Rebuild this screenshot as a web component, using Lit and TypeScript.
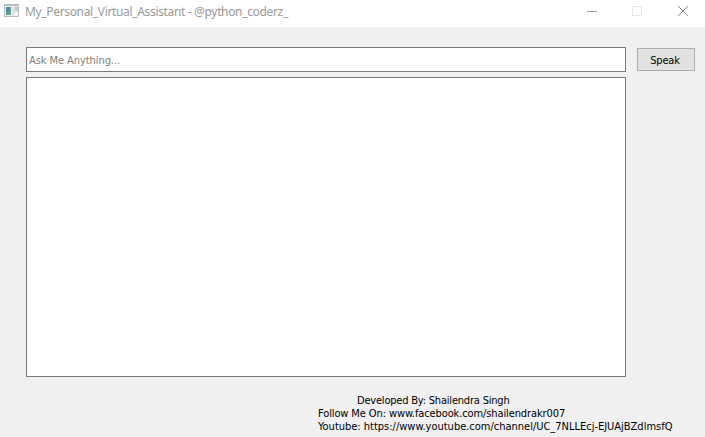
import { LitElement, html, css } from "lit";
import { customElement } from "lit/decorators.js";

@customElement("title-bar")
class TitleBar extends LitElement {
  static styles = css`
    :host { display: flex; height: 27px; background: #fff; flex: none; }
    .icon { width: 15px; height: 14px; margin: 4px 6px 0 4px; flex: none; }
    .title { flex: 1; font: 12px/24px "Noto Sans", sans-serif; color: #999; white-space: pre; letter-spacing: -0.34px; }
    .controls { flex: none; display: flex; margin-right: -1px; }
    .controls svg { width: 46px; height: 24px; display: block; }
  `;
  render() {
    return html`
      <svg class="icon" viewBox="0 0 15 14" shape-rendering="crispEdges">
        <defs>
          <linearGradient id="g" x1="0" y1="0" x2="1" y2="1">
            <stop offset="0" stop-color="#4f79a6" /><stop offset="1" stop-color="#5fb487" />
          </linearGradient>
          <linearGradient id="h" x1="0" y1="0" x2="0" y2="1">
            <stop offset="0" stop-color="#a5c4e8" /><stop offset=".5" stop-color="#b5dcc0" /><stop offset=".6" stop-color="#f7f7f7" />
          </linearGradient>
        </defs>
        <rect width="15" height="13" fill="#b9bcc1" />
        <rect x="1" y="2" width="13" height="10" fill="#f3f3f5" />
        <rect x="2" y="3" width="5" height="8" fill="url(#g)" />
        <rect x="8" y="3" width="3" height="8" fill="#e2e2e5" />
        <rect x="11" y="3" width="3" height="8" fill="url(#h)" />
      </svg>
      <div class="title">My_Personal_Virtual_Assistant - @python_coderz_</div>
      <div class="controls">
        <svg viewBox="0 0 46 24"><path d="M19 11.5h10" stroke="#999" /></svg>
        <svg viewBox="0 0 46 24"><rect x="18.5" y="6.5" width="9" height="9" fill="none" stroke="#e6e6e6" /></svg>
        <svg viewBox="0 0 46 24"><path d="M18 6l10 10M28 6L18 16" stroke="#8c8c8c" stroke-width="1" /></svg>
      </div>
    `;
  }
}

@customElement("app-root")
class AppRoot extends LitElement {
  static styles = css`
    :host {
      display: flex; flex-direction: column; width: 705px; height: 437px; overflow: hidden;
      background: #f0f0f0; color: #000;
      font: 11px/13px "DejaVu Sans Condensed", "DejaVu Sans", sans-serif; font-stretch: condensed;
    }
    .row { display: flex; align-items: center; gap: 11px; margin: 20px 10px 0 26px; }
    .input, .output { box-sizing: border-box; width: 600px; background: #fff; border: 1px solid #7a7a7a; }
    .input { height: 25px; padding: 0 2px; line-height: 25px; color: #7f7f7f; }
    .output { height: 300px; margin: 5px 0 0 26px; flex: none; }
    .button {
      box-sizing: border-box; width: 58px; height: 23px; background: #e1e1e1; border: 1px solid #adadad;
      line-height: 23px; text-align: center; padding-right: 2px;
    }
    .credits { margin: 17px 0 0 318px; white-space: nowrap; }
    .author { padding-left: 39px; }
    .placeholder { letter-spacing: -0.07px; }
    .author, .speak { letter-spacing: -0.2px; }
    .facebook { letter-spacing: -0.11px; }
    .youtube { letter-spacing: -0.01px; }
  `;
  render() {
    return html`
      <title-bar></title-bar>
      <div class="row">
        <div class="input"><span class="placeholder">Ask Me Anything...</span></div>
        <div class="button"><span class="speak">Speak</span></div>
      </div>
      <div class="output"></div>
      <div class="credits">
        <div class="author">Developed By: Shailendra Singh</div>
        <div class="facebook">Follow Me On: www.facebook.com/shailendrakr007</div>
        <div class="youtube">Youtube: https://www.youtube.com/channel/UC_7NLLEcj-EJUAjBZdlmsfQ</div>
      </div>
    `;
  }
}
